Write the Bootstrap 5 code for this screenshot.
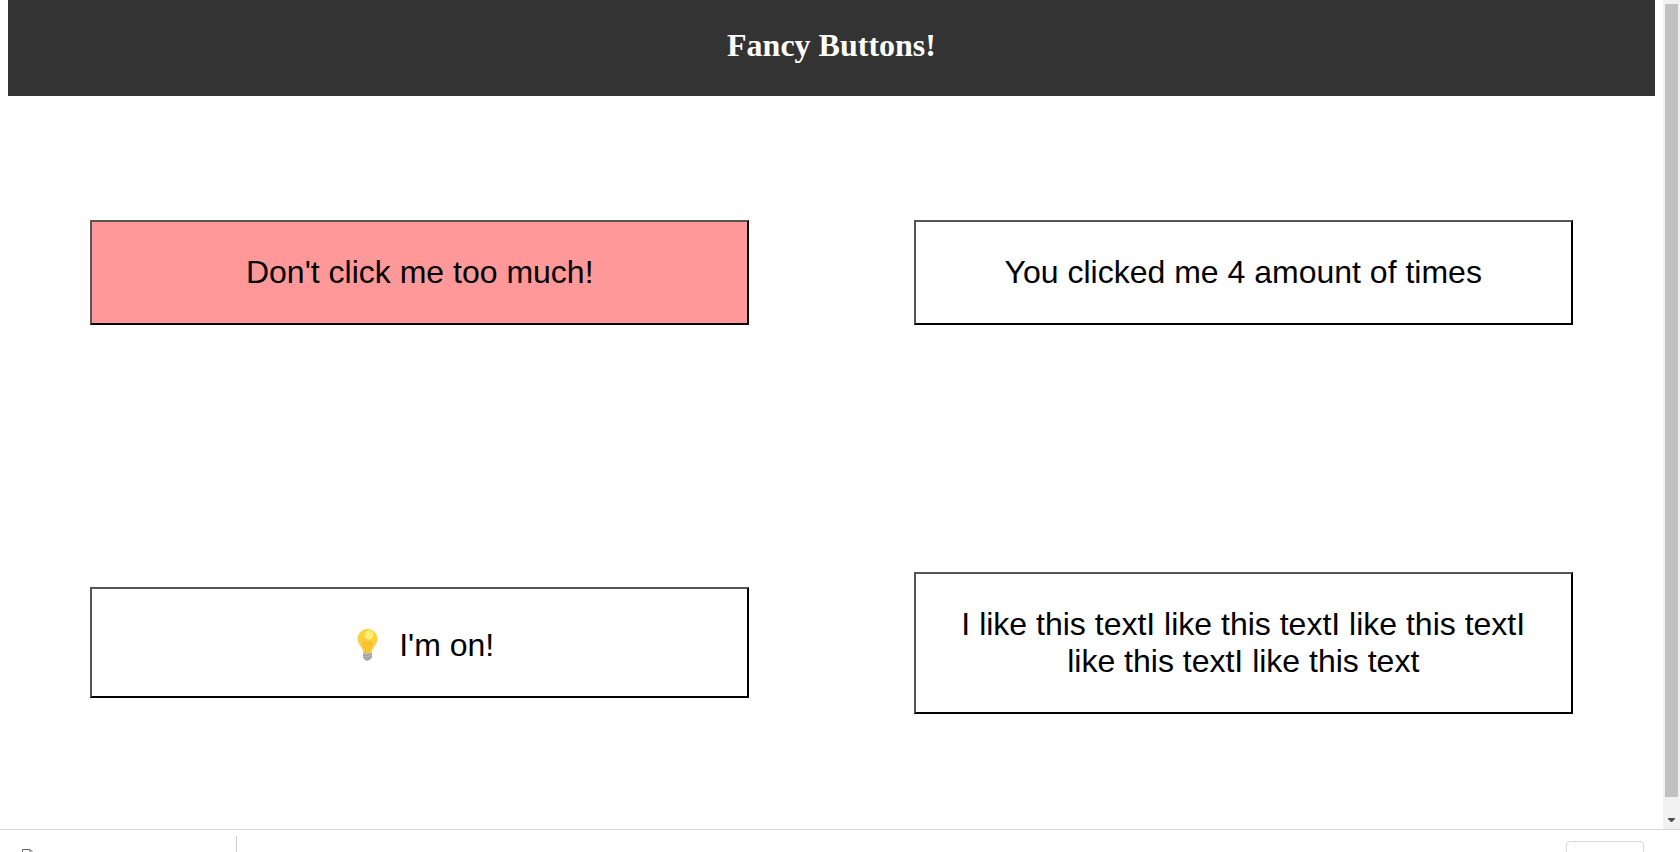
<!DOCTYPE html>
<html lang="en">
<head>
<meta charset="utf-8">
<meta name="viewport" content="width=device-width, initial-scale=1">
<title>Fancy Buttons!</title>
<link href="https://cdn.jsdelivr.net/npm/bootstrap@5.3.0/dist/css/bootstrap.min.css" rel="stylesheet">
<style>
  .page-title { background: #333; color: #fff; font: bold 32px/37px "Liberation Serif", serif; padding: 27px 0 32px; }
  .fancy-btn {
    font: 32px/37px "Liberation Sans", Arial, sans-serif;
    color: #000; background: #fff; border: 2px solid; border-color: #555 #000 #000 #555;
    padding: 32px; margin: 15% 10%; width: 80%;
  }
  .fancy-btn.warm { background: #f99; }
  .bulb { width: 46px; height: 43px; }
  .scroll-track { width: 17px; background: #f1f1f1; padding: 4px 2px 5px; }
  .scroll-thumb { background: #c1c1c1; margin-bottom: 20px; }
  .scroll-arrow { width: 7px; height: 7px; }
  .shelf { height: 23px; border-top: 1px solid #d8d8d8; }
  .shelf-file { width: 237px; border-right: 1px solid #ccc; margin-top: 6px; padding: 13px 0 0 22px; }
  .shelf-file svg { width: 12px; height: 14px; }
  .shelf-btn { width: 78px; height: 30px; margin: 11px 36px 0 0; background: #fff; border: 1px solid #d8d8d8; border-radius: 4px; }
</style>
</head>
<body class="bg-white">
<div class="vh-100 d-flex flex-column overflow-hidden">
  <div class="d-flex flex-fill overflow-hidden">
    <main class="flex-fill px-2 overflow-hidden">
      <h1 class="page-title text-center m-0">Fancy Buttons!</h1>
      <div class="row g-0">
        <div class="col-6 d-flex align-items-center"><button type="button" class="fancy-btn warm">Don't click me too much!</button></div>
        <div class="col-6 d-flex align-items-center"><button type="button" class="fancy-btn">You clicked me 4 amount of times</button></div>
        <div class="col-6 d-flex align-items-center">
          <button type="button" class="fancy-btn d-flex justify-content-center align-items-end gap-2">
            <svg class="bulb" viewBox="1 0 46 43" aria-hidden="true">
              <path d="M23.500 8C17.800 8 13.500 12.400 13.500 18C13.500 23.500 18 25.500 19 30Q19.200 31.500 19.200 32.500H27.800Q27.800 31.500 28 30C29 25.500 33.500 23.500 33.500 18C33.500 12.400 29.200 8 23.500 8Z" fill="#fdd13d"/>
              <path d="M21.500 32L21.500 28Q18 23 19.700 21C21.300 19.600 22.700 21.500 23.500 23C24.300 21.500 25.700 19.600 27.300 21Q29 23 25.500 28V32" fill="#ffc532" stroke="#fbb034" stroke-width="1"/>
              <circle cx="25" cy="14" r="4.400" fill="#fff176"/>
              <path d="M19 32H28V36.500Q27.500 38 26 38.500Q25 39.800 23.500 39.800Q22 39.800 21 38.500Q19.500 38 19 36.500Z" fill="#b8babc"/>
              <path d="M19 34.500L28 33.500M19.200 37L28 36M21 38.700L26 38.300" stroke="#8d8f91" stroke-width=".8" fill="none"/>
            </svg>
            <span>I'm on!</span>
          </button>
        </div>
        <div class="col-6 d-flex align-items-center"><button type="button" class="fancy-btn">I like this textI like this textI like this textI like this textI like this text</button></div>
      </div>
    </main>
    <div class="scroll-track d-flex flex-column align-items-center flex-shrink-0" aria-hidden="true">
      <div class="scroll-thumb flex-fill align-self-stretch"></div>
      <svg class="scroll-arrow" viewBox="0 0 7 7"><path d="M0 1H7V2L4 5H3L0 2Z" fill="#505050"/></svg>
    </div>
  </div>
  <footer class="shelf d-flex justify-content-between flex-shrink-0 overflow-hidden">
    <div class="shelf-file">
      <svg class="d-block" viewBox="0 0 12 14" aria-hidden="true"><path d="M.5 .5H8L11.500 4V13.500H.5ZM8 .5V4H11.500" fill="#fff" stroke="#666"/></svg>
    </div>
    <button type="button" class="shelf-btn" aria-label="Show all"></button>
  </footer>
</div>
<script src="https://cdn.jsdelivr.net/npm/bootstrap@5.3.0/dist/js/bootstrap.bundle.min.js"></script>
</body>
</html>
